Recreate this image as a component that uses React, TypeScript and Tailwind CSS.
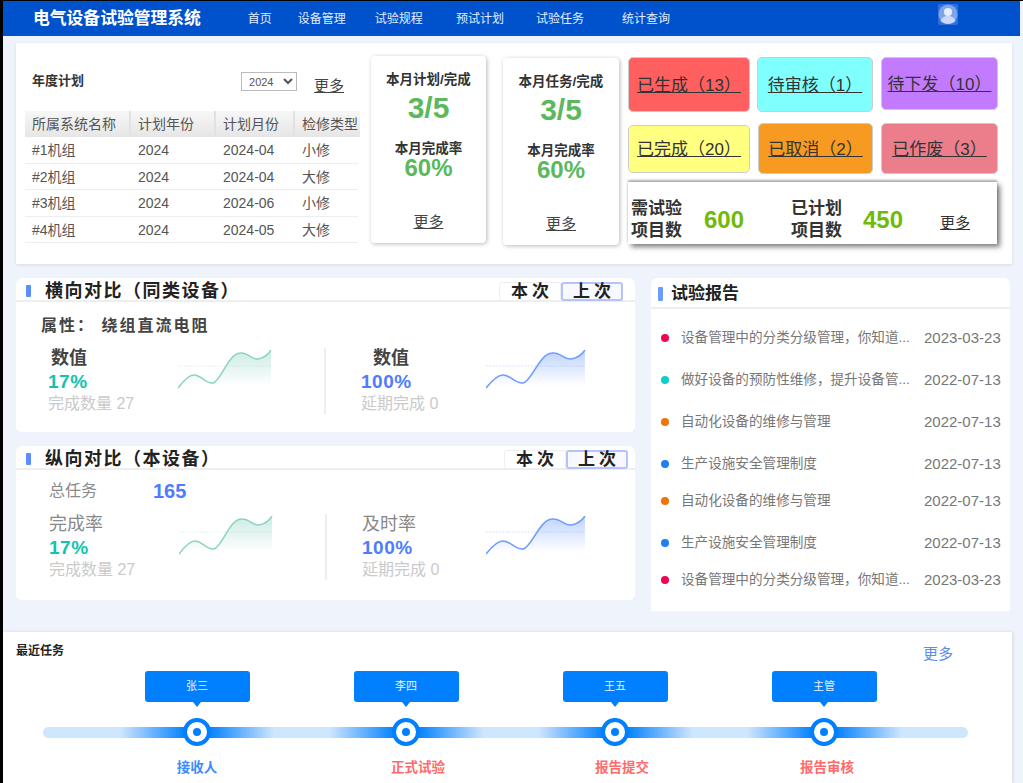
const font = { fontFamily: '"Liberation Sans", "Noto Sans CJK SC", sans-serif' };

const navItems = [
  { label: '首页', cls: 'ml-[47px]' },
  { label: '设备管理', cls: 'ml-[26px]' },
  { label: '试验规程', cls: 'ml-[29px]' },
  { label: '预试计划', cls: 'ml-[33px]' },
  { label: '试验任务', cls: 'ml-[32px]' },
  { label: '统计查询', cls: 'ml-[38px]' },
];

const planRows = [
  ['#1机组', '2024', '2024-04', '小修'],
  ['#2机组', '2024', '2024-04', '大修'],
  ['#3机组', '2024', '2024-06', '小修'],
  ['#4机组', '2024', '2024-05', '大修'],
];

const reports = [
  { title: '设备管理中的分类分级管理，你知道...', date: '2023-03-23', dot: 'bg-[#f0044f]', cls: 'mt-[19px]' },
  { title: '做好设备的预防性维修，提升设备管...', date: '2022-07-13', dot: 'bg-[#0ccfc4]', cls: 'mt-[22px]' },
  { title: '自动化设备的维修与管理', date: '2022-07-13', dot: 'bg-[#ee7407]', cls: 'mt-[22px]' },
  { title: '生产设施安全管理制度', date: '2022-07-13', dot: 'bg-[#1d80ee]', cls: 'mt-[22px]' },
  { title: '自动化设备的维修与管理', date: '2022-07-13', dot: 'bg-[#ee7407]', cls: 'mt-[17px]' },
  { title: '生产设施安全管理制度', date: '2022-07-13', dot: 'bg-[#1d80ee]', cls: 'mt-[22px]' },
  { title: '设备管理中的分类分级管理，你知道...', date: '2023-03-23', dot: 'bg-[#f0044f]', cls: 'mt-[17px]' },
];

const steps = [
  { who: '张三', label: '接收人', labelCls: 'text-[#3b8cff]' },
  { who: '李四', label: '正式试验', labelCls: 'text-[#ff6b6b] pl-[24px]' },
  { who: '王五', label: '报告提交', labelCls: 'text-[#ff6b6b] pl-[14px]' },
  { who: '主管', label: '报告审核', labelCls: 'text-[#ff6b6b] pl-[6px]' },
];

function StatCard({ title, cls }: { title: string; cls: string }) {
  return (
    <div className={`flex h-[187px] flex-col items-center rounded-[4px] bg-white shadow-[1px_1px_4px_rgba(0,0,0,0.28)] ${cls}`}>
      <div className="mt-[16px] h-[16px] text-[13.5px] leading-[16px] font-bold text-[#333]">{title}</div>
      <div className="mt-[3px] h-[34px] text-[30px] leading-[34px] font-bold text-[#5cb85c]">3/5</div>
      <div className="mt-[16px] h-[16px] text-[13.5px] leading-[16px] font-bold text-[#333]">本月完成率</div>
      <div className="-mt-[3px] h-[28px] text-[24px] leading-[28px] font-bold text-[#5cb85c]">60%</div>
      <a className="mt-[30px] text-[15px] leading-[20px] text-[#444] underline">更多</a>
    </div>
  );
}

function Tile({ text, cls }: { text: string; cls: string }) {
  return (
    <div className={`flex items-center justify-center rounded-[5px] border border-[#ccc] pt-[2px] text-[17px] whitespace-nowrap text-[#333] underline ${cls}`}>
      {text}
    </div>
  );
}

function Spark({ id, color, width }: { id: string; color: string; width: number }) {
  return (
    <svg width={width} height="40" viewBox="0 0 94 40" preserveAspectRatio="none" className="mt-[2px] shrink-0">
      <defs>
        <linearGradient id={id} x1="0" y1="0" x2="0" y2="1">
          <stop offset="0" stopColor={color} stopOpacity="0.45" />
          <stop offset="0.9" stopColor={color} stopOpacity="0" />
        </linearGradient>
      </defs>
      <path d="M0 16 H93" stroke={color} strokeOpacity="0.25" strokeDasharray="2 1" fill="none" />
      <path d="M0 38 C6 30 11 25 16 25 C23 25 28 34 35 33 C43 31 50 4 62 3 C70 2 74 10 80 9 C85 8 90 5 93 0 V40 H0 Z" fill={`url(#${id})`} />
      <path d="M0 38 C6 30 11 25 16 25 C23 25 28 34 35 33 C43 31 50 4 62 3 C70 2 74 10 80 9 C85 8 90 5 93 0" stroke={color} strokeWidth="1.5" fill="none" />
    </svg>
  );
}

function Metric({ label, labelCls, value, valueCls, sub, sparkId, color, sparkW, textW }: {
  label: string;
  labelCls: string;
  value: string;
  valueCls: string;
  sub: string;
  sparkId: string;
  color: string;
  sparkW: number;
  textW: string;
}) {
  return (
    <div className="flex h-[66px]">
      <div className={`shrink-0 ${textW}`}>
        <div className={`h-[20px] text-[18px] leading-[20px] ${labelCls}`}>{label}</div>
        <div className={`mt-[3px] h-[22px] text-[19px] leading-[22px] font-bold tracking-[0.5px] ${valueCls}`}>{value}</div>
        <div className="mt-px h-[20px] text-[16px] leading-[20px] whitespace-nowrap text-[#cacaca]">{sub}</div>
      </div>
      <Spark id={sparkId} color={color} width={sparkW} />
    </div>
  );
}

function CardHead({ title, toggleCls }: { title: string; toggleCls: string }) {
  return (
    <div className="flex h-[24px] items-center border-b-2 border-[#eeeeee] pt-[4px]">
      <span className="ml-[10px] h-[12px] w-[5px] rounded-[1px] bg-[#5b8dff]" />
      <span className="ml-[14px] text-[18px] font-bold tracking-[1.5px] whitespace-nowrap text-[#222]">{title}</span>
      <div className={`ml-auto flex h-[19px] text-[17px] leading-[18px] font-bold tracking-[4px] text-[#222] ${toggleCls}`}>
        <span className="w-[62px] rounded-l-[3px] border border-[#eeeeee] pl-[4px] text-center">本次</span>
        <span className="w-[62px] rounded-[3px] border-2 border-[#b4c4f8] bg-[#f7f9ff] pl-[4px] text-center leading-[15px]">上次</span>
      </div>
    </div>
  );
}

export default function App() {
  return (
    <div style={font} className="h-[783px] w-[1023px] overflow-hidden border-t border-l-[3px] border-black bg-[#eff3fb]">
      <header className="flex h-[35px] w-[1017px] items-center bg-[#0052cc] text-white">
        <span className="ml-[30px] text-[16.800px] font-bold whitespace-nowrap">电气设备试验管理系统</span>
        {navItems.map((item) => (
          <span key={item.label} className={`text-[12px] text-[#e4edff] ${item.cls}`}>{item.label}</span>
        ))}
        <svg width="20" height="21" viewBox="0 0 20 21" className="mb-[8px] ml-[268px]">
          <rect width="20" height="21" rx="2" fill="#2f6fe0" />
          <circle cx="10" cy="10" r="9.500" fill="#7fa4ec" />
          <circle cx="10" cy="8" r="4" fill="#e6eefc" />
          <path d="M2.500 17c1-3.500 4-5 7.500-5s6.500 1.500 7.500 5c-2 1.800-4.500 3-7.500 3s-5.500-1.200-7.500-3z" fill="#c9d9f7" />
        </svg>
      </header>

      <section className="mt-[7px] ml-[13px] flex h-[221px] w-[996px] items-start bg-white shadow-[0_1px_3px_rgba(0,0,0,0.1)]">
        <div className="ml-[9px] w-[335px] shrink-0">
          <div className="flex h-[68px] items-start pt-[29px]">
            <span className="ml-[7px] text-[13px] leading-[18px] font-bold text-[#333]">年度计划</span>
            <select defaultValue="2024" className="ml-[157px] h-[19px] w-[56px] border border-[#bbb] bg-white pl-[3px] text-[11px] text-[#555]">
              <option>2024</option>
            </select>
            <a className="mt-[4px] ml-[17px] text-[15px] leading-[20px] text-[#444] underline">更多</a>
          </div>
          <div className="grid h-[26px] grid-cols-[106px_85px_79px_65px] bg-gradient-to-b from-[#f7f7f7] to-[#e6e6e6] text-[14px] leading-[26px] text-[#555]">
            <span className="border-r-2 border-[#e2e2e2] pl-[7px]">所属系统名称</span>
            <span className="border-r-2 border-[#e2e2e2] pl-[7px]">计划年份</span>
            <span className="border-r-2 border-[#e2e2e2] pl-[7px]">计划月份</span>
            <span className="pl-[7px] whitespace-nowrap">检修类型</span>
          </div>
          <div className="w-[333px]">
            {planRows.map((row) => (
              <div key={row[0]} className="grid h-[26.500px] grid-cols-[106px_85px_79px_63px] border-b border-[#eeeeee] text-[14px] leading-[26px] text-[#555]">
                {row.map((cell) => (
                  <span key={cell} className="pl-[7px]">{cell}</span>
                ))}
              </div>
            ))}
          </div>
        </div>

        <StatCard title="本月计划/完成" cls="mt-[13px] ml-[11px] w-[115px] shrink-0" />
        <StatCard title="本月任务/完成" cls="mt-[15px] ml-[17px] w-[116px] shrink-0" />

        <div className="mt-[14px] ml-[9px] w-[371px] shrink-0">
          <div className="flex h-[55px] items-start gap-x-[7px]">
            <Tile text="已生成（13）" cls="h-[55px] w-[122px] bg-[#ff5f5f]" />
            <Tile text="待审核（1）" cls="mr-px h-[55px] w-[116px] bg-[#80ffff]" />
            <Tile text="待下发（10）" cls="h-[53px] w-[117px] bg-[#c27bff]" />
          </div>
          <div className="mt-[11px] flex h-[51px] items-start gap-x-[8px]">
            <Tile text="已完成（20）" cls="mt-[2px] h-[48px] w-[122px] bg-[#ffff80]" />
            <Tile text="已取消（2）" cls="h-[51px] w-[115px] bg-[#f79a22]" />
            <Tile text="已作废（3）" cls="h-[51px] w-[117px] bg-[#ec7d8b]" />
          </div>
          <div className="mt-[8px] flex h-[62px] w-[369px] items-center bg-white pt-[13px] pl-[3px] shadow-[3px_3px_5px_rgba(0,0,0,0.5),0_-2px_2px_rgba(0,0,0,0.3)]">
            <div className="w-[51px] text-[17px] leading-[22px] font-bold text-[#333]">需试验<br />项目数</div>
            <span className="ml-[22px] w-[64px] text-[24px] font-bold text-[#6fba0a]">600</span>
            <div className="ml-[23px] w-[51px] text-[17px] leading-[22px] font-bold text-[#333]">已计划<br />项目数</div>
            <span className="ml-[21px] w-[39px] text-[24px] font-bold text-[#6fba0a]">450</span>
            <a className="mt-[8px] ml-[38px] text-[15px] text-[#333] underline">更多</a>
          </div>
        </div>
      </section>

      <div className="mt-[14px] ml-[13px] flex items-start">
        <div className="flex w-[619px] shrink-0 flex-col gap-y-[14px]">
          <div className="h-[154px] rounded-[6px] bg-white">
            <CardHead title="横向对比（同类设备）" toggleCls="mr-[12px]" />
            <div className="mt-[16px] ml-[25px] h-[16px] text-[16px] leading-[16px] font-bold tracking-[2px] whitespace-nowrap text-[#444]">属性：&nbsp;绕组直流电阻</div>
            <div className="mt-[14px] flex">
              <div className="h-[66px] w-[310px] border-r-2 border-[#eeeeee] pl-[32px]">
                <Metric label="数值" labelCls="ml-[3px] font-bold text-[#444]" value="17%" valueCls="text-[#13c2b0]" sub="完成数量 27" sparkId="a1" color="#8dd3c4" sparkW={94} textW="w-[130px]" />
              </div>
              <div className="pl-[35px]">
                <Metric label="数值" labelCls="ml-[12px] font-bold text-[#444]" value="100%" valueCls="text-[#4d7cfe]" sub="延期完成 0" sparkId="a2" color="#6f9cff" sparkW={100} textW="w-[125px]" />
              </div>
            </div>
          </div>

          <div className="h-[154px] rounded-[6px] bg-white">
            <CardHead title="纵向对比（本设备）" toggleCls="mr-[7px]" />
            <div className="mt-[11px] flex h-[20px] items-center pl-[33px]">
              <span className="w-[104px] text-[16px] text-[#8a8a8a]">总任务</span>
              <span className="text-[20px] font-bold text-[#4d7cfe]">165</span>
            </div>
            <div className="mt-[13px] flex">
              <div className="h-[66px] w-[311px] border-r-2 border-[#eeeeee] pl-[33px]">
                <Metric label="完成率" labelCls="text-[#888]" value="17%" valueCls="text-[#13c2b0]" sub="完成数量 27" sparkId="b1" color="#8dd3c4" sparkW={94} textW="w-[130px]" />
              </div>
              <div className="pl-[35px]">
                <Metric label="及时率" labelCls="text-[#888]" value="100%" valueCls="text-[#4d7cfe]" sub="延期完成 0" sparkId="b2" color="#6f9cff" sparkW={100} textW="w-[124px]" />
              </div>
            </div>
          </div>
        </div>

        <div className="ml-[16px] h-[333px] w-[359px] shrink-0 rounded-t-[6px] bg-white">
          <div className="flex h-[31px] items-center border-b-2 border-[#eeeeee] pt-[2px]">
            <span className="ml-[7px] h-[14px] w-[5px] rounded-[1px] bg-[#6b9bff]" />
            <span className="ml-[8px] text-[17px] font-bold text-[#222]">试验报告</span>
          </div>
          {reports.map((r, i) => (
            <div key={i} className={`flex h-[20px] items-center text-[#777] ${r.cls}`}>
              <span className={`ml-[10px] h-[8px] w-[8px] shrink-0 rounded-full ${r.dot}`} />
              <span className="ml-[12px] w-[231px] text-[13.600px] whitespace-nowrap">{r.title}</span>
              <span className="ml-[12px] text-[15px] whitespace-nowrap">{r.date}</span>
            </div>
          ))}
        </div>
      </div>

      <section className="mt-[21px] h-[151px] w-[1009px] bg-white pt-[12px] shadow-[1px_0_3px_rgba(0,0,0,0.12)]">
        <div className="flex h-[20px] items-center">
          <span className="ml-[13px] -translate-y-[3px] text-[12px] font-bold text-[#222]">最近任务</span>
          <span className="ml-[859px] text-[15px] text-[#5b8def]">更多</span>
        </div>
        <div className="mt-[7px] ml-[89.500px] grid grid-cols-[repeat(4,209px)]">
          {steps.map((s) => (
            <div key={s.who} className="flex justify-center">
              <div className="relative flex h-[31px] w-[105px] items-center justify-center rounded-[3px] bg-[#0080ff] text-[11px] text-[#e8f3ff]">
                {s.who}
                <span className="absolute top-full left-1/2 -ml-[4px] border-x-[4px] border-t-[5px] border-x-transparent border-t-[#0080ff]" />
              </div>
            </div>
          ))}
        </div>
        <div className="mt-[16px] ml-[40px] flex h-[28px] w-[925px] items-center">
          <div className="h-[11px] w-[49.500px] rounded-l-full bg-[#cfe6ff]" />
          {steps.map((s) => (
            <div key={s.who} className="flex h-[11px] w-[209px] items-center justify-center bg-[linear-gradient(90deg,#cfe6ff_13%,#0080ff_45%,#0080ff_55%,#cfe6ff_87%)]">
              <div className="flex h-[28px] w-[28px] items-center justify-center rounded-full border-[4px] border-[#0080ff] bg-white">
                <span className="h-[8px] w-[8px] rounded-full bg-[#0080ff]" />
              </div>
            </div>
          ))}
          <div className="h-[11px] w-[39.500px] rounded-r-full bg-[#cfe6ff]" />
        </div>
        <div className="mt-[12px] ml-[89.500px] grid grid-cols-[repeat(4,209px)]">
          {steps.map((s) => (
            <div key={s.who} className={`text-center text-[13.500px] leading-[20px] font-bold ${s.labelCls}`}>{s.label}</div>
          ))}
        </div>
      </section>
    </div>
  );
}
